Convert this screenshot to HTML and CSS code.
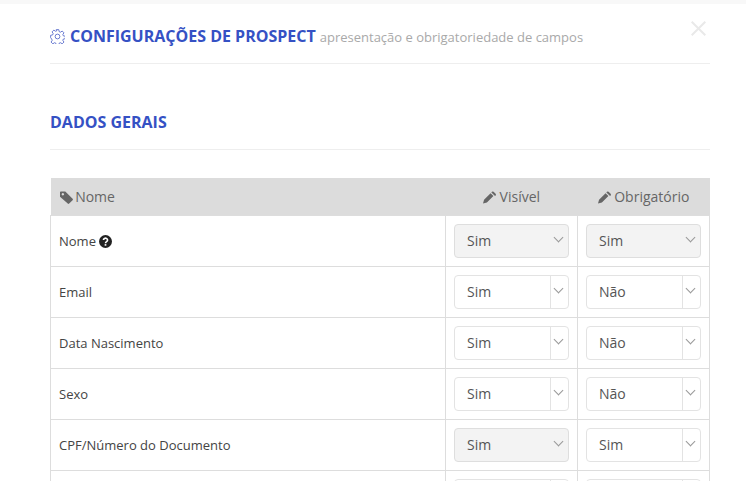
FILE: index.html
```html
<!DOCTYPE html>
<html lang="pt">
<head>
  <meta charset="UTF-8">
  <title>Configurações de Prospect</title>
  <link rel="stylesheet" href="styles.css">
</head>
<body>
  <div class="modal">
    <button class="close" aria-label="Fechar">
      <svg width="15" height="15" viewBox="0 0 15 15"><path d="M.7.7 14.300 14.300M14.300.7.7 14.300" stroke="#e9e9e9" stroke-width="2" fill="none"/></svg>
    </button>
    <div class="modal-head">
      <svg class="gear" width="15" height="15" viewBox="0 0 24 24" fill="none" stroke="#4a5fc6" stroke-width="1.300" stroke-linejoin="round"><circle cx="12" cy="12" r="3.800"/><path d="M10 1h4l.7 3.300 2 .8 2.800-1.800 2.800 2.800-1.800 2.800.8 2 3.300.7v3.800l-3.300.7-.8 2 1.800 2.800-2.800 2.800-2.800-1.800-2 .8-.7 3.300h-4l-.7-3.300-2-.8-2.800 1.800-2.800-2.800 1.800-2.800-.8-2L1 13.900v-3.800l3.300-.7.8-2-1.800-2.800 2.800-2.800 2.800 1.800 2-.8z"/></svg>
      <span class="title">CONFIGURAÇÕES DE PROSPECT</span>
      <small class="subtitle">apresentação e obrigatoriedade de campos</small>
    </div>

    <h2 class="section">DADOS GERAIS</h2>

    <table class="fields">
      <thead>
        <tr>
          <th class="col-name">
            <svg class="ico" width="13" height="13" viewBox="0 0 16 16" fill="#666"><path fill-rule="evenodd" d="M0 1.500A1 1 0 0 1 1 .5h5.500l9 9a1.300 1.300 0 0 1 0 1.800l-4.200 4.200a1.300 1.300 0 0 1-1.800 0L0 7zM3.500 2.500a1.500 1.500 0 1 0 .01 0z"/></svg>
            Nome
          </th>
          <th class="col-opt">
            <svg class="ico" width="13" height="13" viewBox="0 0 16 15" fill="#666"><path d="M0 15l1.300-4.800 8-8 3.500 3.500-8 8zM10.300 1.200l.7-.7a1.500 1.500 0 0 1 2 0l2.500 2.500a1.500 1.500 0 0 1 0 2l-.7.7z"/></svg>
            Visível
          </th>
          <th class="col-opt">
            <svg class="ico" width="13" height="13" viewBox="0 0 16 15" fill="#666"><path d="M0 15l1.300-4.800 8-8 3.500 3.500-8 8zM10.300 1.200l.7-.7a1.500 1.500 0 0 1 2 0l2.500 2.500a1.500 1.500 0 0 1 0 2l-.7.7z"/></svg>
            Obrigatório
          </th>
        </tr>
      </thead>
      <tbody>
        <tr>
          <td>Nome
            <svg class="help" width="13" height="13" viewBox="0 0 12 12"><circle cx="6" cy="6" r="6" fill="#222"/><path d="M4.100 4.700a1.900 1.700 0 1 1 2.900 1.400c-.7.400-1 .7-1 1.400" fill="none" stroke="#fff" stroke-width="1.500"/><rect x="5.200" y="8.400" width="1.600" height="1.500" fill="#fff"/></svg>
          </td>
          <td><div class="pick locked">Sim</div></td>
          <td><div class="pick locked">Sim</div></td>
        </tr>
        <tr>
          <td>Email</td>
          <td><div class="pick">Sim</div></td>
          <td><div class="pick">Não</div></td>
        </tr>
        <tr>
          <td>Data Nascimento</td>
          <td><div class="pick">Sim</div></td>
          <td><div class="pick">Não</div></td>
        </tr>
        <tr>
          <td>Sexo</td>
          <td><div class="pick">Sim</div></td>
          <td><div class="pick">Não</div></td>
        </tr>
        <tr>
          <td>CPF/Número do Documento</td>
          <td><div class="pick locked">Sim</div></td>
          <td><div class="pick">Sim</div></td>
        </tr>
        <tr>
          <td></td>
          <td><div class="pick"></div></td>
          <td><div class="pick"></div></td>
        </tr>
      </tbody>
    </table>
  </div>
</body>
</html>
```

FILE: styles.css
```css
html, body {
  margin: 0;
  height: 100%;
  overflow: hidden;
  background-color: #fff;
}
body {
  font-family: "Open Sans", Arial, sans-serif;
  font-size: 13px;
  color: #555;
  border-top: 4px solid #f8f8f8;
  box-sizing: border-box;
}
.modal {
  position: relative;
  padding: 0 36px 0 50px;
}
.close {
  position: absolute;
  top: 17px;
  left: 691px;
  padding: 0;
  border: 0;
  background: none;
  line-height: 0;
}
.modal-head {
  display: flex;
  align-items: center;
  height: 60px;
  box-sizing: border-box;
  padding-top: 5px;
  border-bottom: 1px solid #eee;
}
.gear {
  margin-right: 5px;
}
.title {
  font-size: 16px;
  font-weight: 700;
  color: #3551c4;
}
.subtitle {
  margin-left: 4px;
  margin-top: 2px;
  font-size: 13px;
  color: #a9a9a9;
}
.section {
  margin: 0;
  height: 86px;
  padding-top: 47px;
  box-sizing: border-box;
  font-size: 16px;
  line-height: 22px;
  font-weight: 700;
  color: #3551c4;
  border-bottom: 1px solid #eee;
}
.fields {
  width: 660px;
  margin-top: 28px;
  border-collapse: collapse;
  table-layout: fixed;
}
.fields th {
  height: 37px;
  padding: 0;
  background-color: #dcdcdc;
  font-size: 14px;
  font-weight: 400;
  color: #666;
  text-align: center;
}
.fields .col-name {
  padding-left: 9px;
  text-align: left;
}
.col-name .ico {
  margin-right: -1px;
}
.col-opt {
  width: 132px;
}
.ico {
  vertical-align: -2px;
}
.fields td {
  height: 50px;
  padding: 0 8px;
  border: 1px solid #ddd;
  font-size: 13px;
  color: #444;
}
.help {
  vertical-align: -2px;
}
.pick {
  position: relative;
  height: 34px;
  box-sizing: border-box;
  padding-left: 12px;
  border: 1px solid #e3e3e3;
  border-radius: 4px;
  background-color: #fff;
  font-size: 14px;
  line-height: 32px;
  color: #555;
}
.pick::before {
  content: "";
  position: absolute;
  top: 0;
  bottom: 0;
  right: 17px;
  border-left: 1px solid #e3e3e3;
}
.pick::after {
  content: "";
  position: absolute;
  top: 9px;
  right: 6px;
  width: 6px;
  height: 6px;
  border-right: 1px solid #999;
  border-bottom: 1px solid #999;
  transform: rotate(45deg);
}
.pick.locked {
  background-color: #f3f3f3;
  border-color: #dedede;
}
.pick.locked::before {
  display: none;
}
```
